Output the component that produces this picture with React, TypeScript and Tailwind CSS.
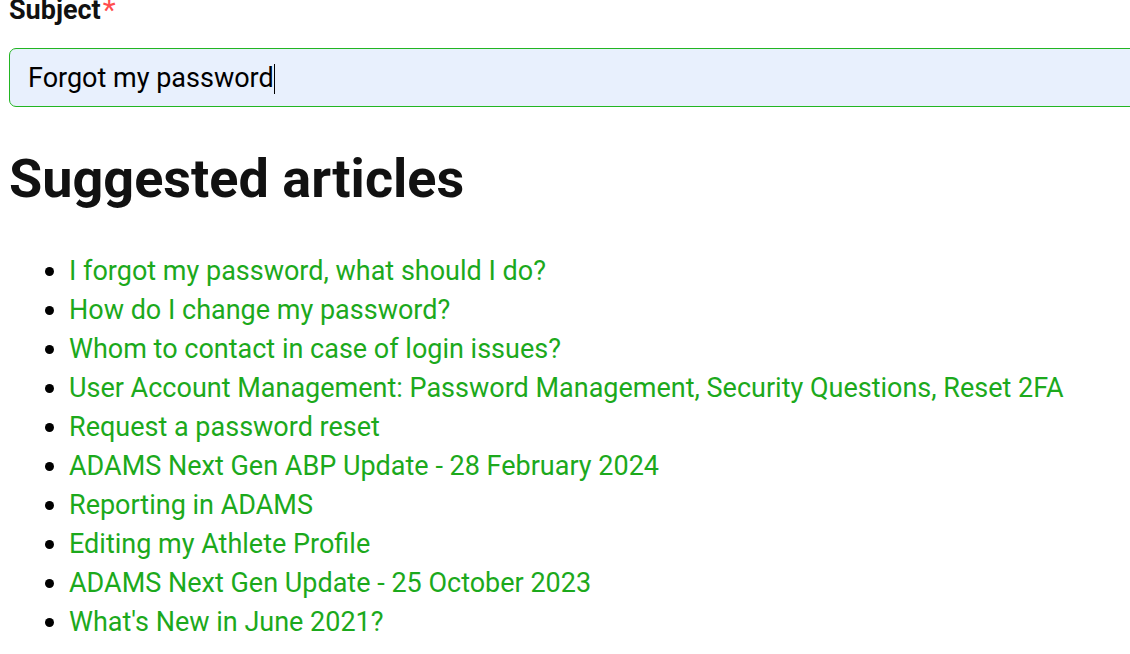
import React from "react";

const articles = [
  "I forgot my password, what should I do?",
  "How do I change my password?",
  "Whom to contact in case of login issues?",
  "User Account Management: Password Management, Security Questions, Reset 2FA",
  "Request a password reset",
  "ADAMS Next Gen ABP Update - 28 February 2024",
  "Reporting in ADAMS",
  "Editing my Athlete Profile",
  "ADAMS Next Gen Update - 25 October 2023",
  "What's New in June 2021?",
];

export default function App() {
  return (
    <div
      className="w-[1130px] h-[654px] overflow-hidden bg-white text-[#111]"
      style={{ fontFamily: "Roboto, 'Liberation Sans', sans-serif" }}
    >
      <div className="pl-[9px] w-[1200px]">
        <div className="-mt-[6px] h-[32px] text-[27px] font-bold leading-[32px] flex items-start">
          <span>Subject</span>
          <span className="text-[#ff4d4d] font-normal text-[30px] leading-[32px] ml-[2px]">*</span>
        </div>
        <div className="mt-[22px] h-[59px] rounded-[7px] border border-[#22b522] bg-[#e8f0fd] pl-[18px] flex items-center text-[27px] text-black">
          <span className="mt-[2px]">Forgot my password</span>
          <span className="inline-block w-px h-[30px] bg-black mt-[2px]"></span>
        </div>
        <h1 className="mt-[39px] text-[54px] font-bold leading-[66px] text-[#111]">
          Suggested articles
        </h1>
        <ul className="mt-[40px] pl-[36px] text-[27px] leading-[39px] text-[#1ca91c]">
          {articles.map((a) => (
            <li key={a} className="flex items-center">
              <span className="w-[9px] h-[9px] rounded-full bg-black mr-[15px] shrink-0"></span>
              <span>{a}</span>
            </li>
          ))}
        </ul>
      </div>
    </div>
  );
}
